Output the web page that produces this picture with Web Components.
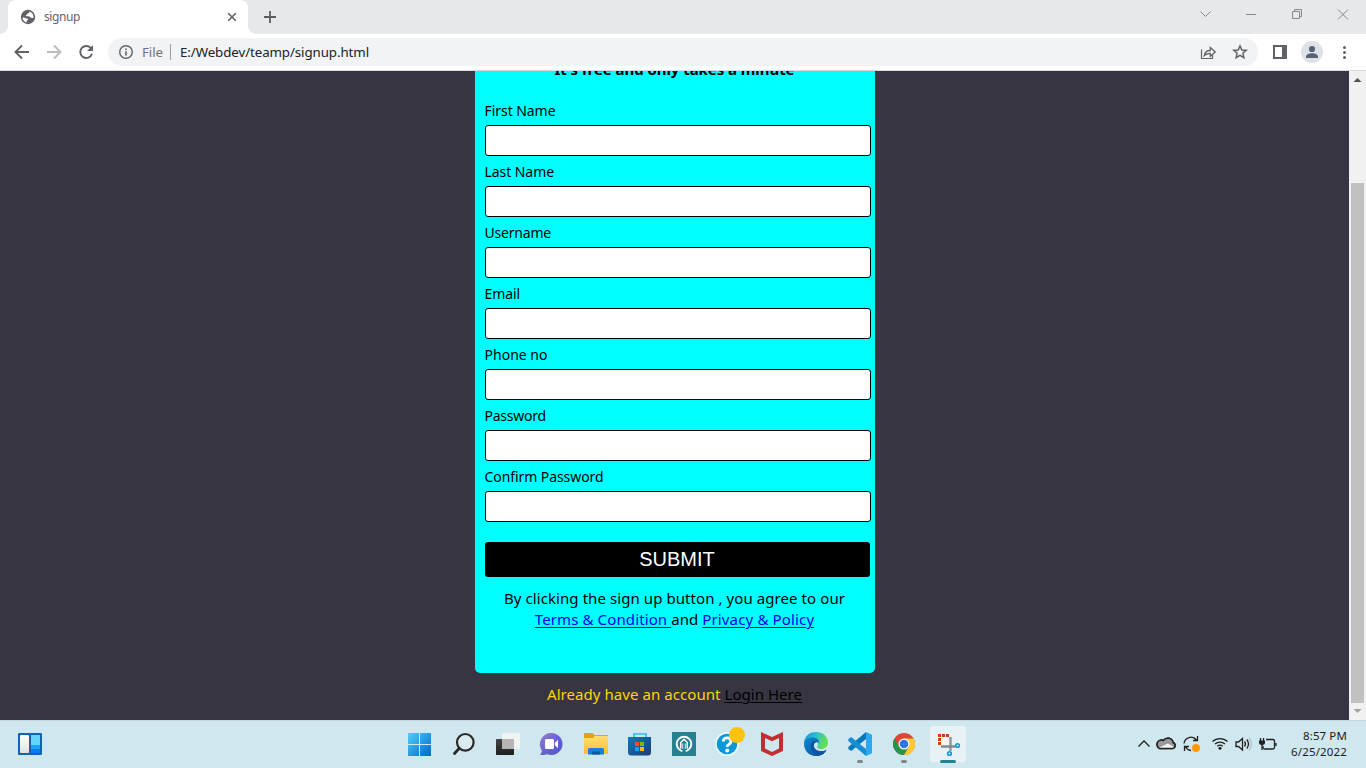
<!DOCTYPE html>
<html lang="en">
<head>
<meta charset="utf-8">
<title>signup</title>
<style>
html,body{margin:0;height:100%;overflow:hidden;font-family:"Noto Sans","Open Sans",sans-serif}
</style>
</head>
<body>
<desktop-screen></desktop-screen>
<script>
const define=(name,html,after)=>{
  const t=document.createElement('template');t.innerHTML=html;
  customElements.define(name,class extends HTMLElement{
    constructor(){super();this.attachShadow({mode:'open'}).append(t.content.cloneNode(true));}
    connectedCallback(){if(after)after.call(this,this.shadowRoot);}
  });
};

/* Text run whose tracking is adjusted to occupy a given width */
define('fit-text',`<style>:host{display:inline-block;white-space:pre}span{display:inline-block;white-space:pre;text-decoration:var(--line,none);text-decoration-thickness:1px;text-underline-offset:2px;text-decoration-skip-ink:auto}</style><span><slot></slot></span>`,function(root){
  const s=root.querySelector('span'),w=+this.getAttribute('width'),n=this.textContent.length;
  const now=s.getBoundingClientRect().width;
  if(w&&n)s.style.letterSpacing=((w-now)/n)+'px';
});

define('browser-tabs',`<style>
:host{display:flex;height:34px;background:#e5e9ec;align-items:stretch;padding-left:8px;box-sizing:border-box}
.tab{width:240px;box-sizing:border-box;background:#fff;border-radius:8px 8px 0 0;display:flex;align-items:center;padding:0 10px 0 12px;color:#5f6368;font-size:12px;position:relative}
.tab::before,.tab::after{content:"";position:absolute;bottom:0;width:8px;height:8px}
.tab::before{left:-8px;background:radial-gradient(circle at 0 0,transparent 7.5px,#fff 8px)}
.tab::after{right:-8px;background:radial-gradient(circle at 100% 0,transparent 7.5px,#fff 8px)}
.name{flex:1;margin-left:8px;line-height:32px}
svg{display:block;flex:none}
.plus{align-self:center;margin-left:15px}
.win{margin-left:auto;display:flex;align-items:center;height:28px}
</style>
<div class="tab">
<svg width="16" height="16" viewBox="0 0 16 16"><circle cx="8" cy="8" r="7.200" fill="#5f6368"/><path d="M2.500 8.500C4.500 8 5.500 9.500 7.300 9.500c1 0 1 1 .4 1.600-.8.600-.8 1.400-1.300 2.300C4 12.800 2.600 10.800 2.500 8.500ZM9.300 2.500c.3 1.200-.4 1.700-1.500 2-.9.300-.4 1.300-1.600 1.500-.7.200-.4 1.300.5 1.300 1.500 0 2.300-.3 3 .5.700.9 1.500 1.400 3.700 1.100.600-2.900-1.200-5.600-4.100-6.400Z" fill="#fff"/></svg>
<span class="name"><fit-text width="36">signup</fit-text></span>
<svg width="12" height="12" viewBox="0 0 12 12"><path d="M2.200 2.200l7.600 7.600M9.800 2.200l-7.600 7.600" stroke="#5f6368" stroke-width="1.600"/></svg>
</div>
<svg class="plus" width="14" height="14" viewBox="0 0 14 14"><path d="M7 1v12M1 7h12" stroke="#5b5d61" stroke-width="1.800"/></svg>
<div class="win">
<svg width="46" height="28" fill="none" stroke="#85888b"><path d="M18.500 11.500l5 5 5-5"/></svg>
<svg width="46" height="28" fill="none" stroke="#85888b"><path d="M18 14.500h10"/></svg>
<svg width="46" height="28" fill="none" stroke="#85888b"><path d="M18.500 11.500h7v7h-7zM20.500 11.500v-2h7v7h-2"/></svg>
<svg width="46" height="28" fill="none" stroke="#85888b"><path d="M18 9.500l10 10M28 9.500l-10 10"/></svg>
</div>`);

define('browser-toolbar',`<style>
:host{display:flex;height:37px;box-sizing:border-box;background:#fff;border-bottom:1px solid #d8dadd;align-items:center}
svg{display:block;flex:none}
.omni{height:28px;flex:none;width:1150px;background:#f1f3f4;border-radius:14px;display:flex;align-items:center;font-size:13.300px;box-sizing:border-box;padding-left:10px;color:#202124}
.file{color:#70757a;margin-left:8px}.bar{width:1px;height:16px;background:#9b9ea2;margin:0 9px 0 7px}
.sp{flex:1}
</style>
<svg width="108" height="36" fill="none" stroke="#5f6368" stroke-width="1.900"><path d="M29 18H16M22 11.500 15.500 18l6.500 6.500"/><g stroke="#babcbe"><path d="M47 18h13M54 11.500 60.500 18 54 24.500"/></g><path d="M91.200 14.500A6 6 0 1 0 92 19.800"/><path d="M93 11v6h-6z" fill="#5f6368" stroke="none"/></svg>
<div class="omni">
<svg width="16" height="16" viewBox="0 0 16 16"><circle cx="8" cy="8" r="6.300" fill="none" stroke="#5f6368" stroke-width="1.400"/><path d="M7.200 4.500h1.600v1.600H7.200zM7.200 7.300h1.600v4.300H7.200z" fill="#5f6368"/></svg>
<fit-text class="file" width="21">File</fit-text><span class="bar"></span><fit-text width="189">E:/Webdev/teamp/signup.html</fit-text>
<span class="sp"></span>
<svg width="66" height="28" fill="none" stroke="#5f6368"><path d="M9.500 11.500v9h11v-4" stroke-width="1.200"/><path d="M12.300 17.500c.6-3.500 3-5 6-5V9.500l5 4.500-5 4.300v-3c-2.700 0-4.500.6-6 2.200Z" stroke-width="1.300"/><path d="M48 7.900l1.800 4.100 4.400.4-3.300 2.900 1 4.400-3.900-2.300-3.900 2.300 1-4.400-3.300-2.900 4.400-.4Z" stroke-width="1.500"/></svg>
</div>
<svg width="108" height="36"><path fill="#5f6368" fill-rule="evenodd" d="M15 11h14v14H15zM17 13v10h7V13z"/><circle cx="54" cy="18" r="11" fill="#dee1e6"/><circle cx="54" cy="15" r="3.100" fill="#56617a"/><path d="M48 24v-1.500c0-2 3-3.300 6-3.300s6 1.300 6 3.300V24z" fill="#56617a"/><g fill="#5f6368"><circle cx="86.500" cy="13.500" r="1.500"/><circle cx="86.500" cy="18.500" r="1.500"/><circle cx="86.500" cy="23.500" r="1.500"/></g></svg>`);

define('form-field',`<style>
:host{display:block;height:61px}
label{display:block;height:30px;line-height:32px;font-size:14px}
input{display:block;box-sizing:border-box;width:386px;height:31px;border:1px solid #000;border-radius:3px;background:#fff;padding:0;outline:0}
</style><label><slot></slot></label><input type="text">`);

define('signup-card',`<style>
:host{display:block;width:400px;height:640px;margin:-38px auto 0;background:#0ff;border-radius:5px;box-sizing:border-box;padding:25px 0 0 10px;color:#000}
h4{margin:0 10px 0 0;text-align:center;font-size:15px;line-height:22px;height:15px;font-weight:700}
.fields{margin-top:22px}
button{display:block;width:385px;height:35px;margin-top:20px;border:0;border-radius:3px;background:#000;color:#fff;font:20px "Liberation Sans",Arial,sans-serif;padding:0}
p{margin:11px 10px 0 0;text-align:center;font-size:15px;line-height:21px;white-space:nowrap}
a{color:#00e;text-decoration:none;--line:underline}
fit-text{vertical-align:top}
</style>
<h4><fit-text width="240">It's free and only takes a minute</fit-text></h4>
<div class="fields">
<form-field><fit-text width="71">First Name</fit-text></form-field>
<form-field><fit-text width="69.500">Last Name</fit-text></form-field>
<form-field><fit-text width="66.500">Username</fit-text></form-field>
<form-field><fit-text width="35.500">Email</fit-text></form-field>
<form-field><fit-text width="63">Phone no</fit-text></form-field>
<form-field><fit-text width="61.500">Password</fit-text></form-field>
<form-field><fit-text width="119">Confirm Password</fit-text></form-field>
</div>
<button>SUBMIT</button>
<p><fit-text width="341">By clicking the sign up button , you agree to our</fit-text><br><a href="#"><fit-text width="136.500">Terms &amp; Condition </fit-text></a><fit-text width="31">and </fit-text><a href="#"><fit-text width="112">Privacy &amp; Policy</fit-text></a></p>`);

define('page-scrollbar',`<style>
:host{display:flex;flex-direction:column;width:17px;background:#f1f1f1}
svg{display:block;flex:none}.thumb{width:13px;height:520px;background:#c1c1c1;margin:95px 0 0 2px}
</style><svg width="17" height="17"><path d="M4.500 11 8.500 7l4 4z" fill="#505050"/></svg><div class="thumb"></div><svg width="17" height="17"><path d="M4.500 6h8l-4 4z" fill="#a3a3a3"/></svg>`);

define('page-view',`<style>
:host{display:flex;height:649px;overflow:hidden;background:#363541}
main{flex:1;overflow:hidden}
.login{margin:11px 0 0;text-align:center;font-size:15px;line-height:21px;color:#ffd700;white-space:nowrap}
a{color:#000;text-decoration:none;--line:underline}fit-text{vertical-align:top}
</style><main><signup-card></signup-card><p class="login"><fit-text width="177.500">Already have an account </fit-text><a href="#"><fit-text width="77.500">Login Here</fit-text></a></p></main><page-scrollbar></page-scrollbar>`);

define('task-icon',`<style>:host{display:block;width:44px;height:48px;flex:none}::slotted(svg){display:block}</style><slot></slot>`);

define('task-bar',`<style>
:host{display:flex;height:48px;background:#cfe7ee;box-shadow:inset 0 1px #c0d8df;color:#1b1b1b}
svg{display:block;flex:none}
.widgets{width:398px;flex:none}.tray{margin-left:auto;display:flex}
.clock{width:81px;box-sizing:border-box;padding:8px 19px 0 0;text-align:right;font-size:11.500px;line-height:16px}
.clock fit-text{display:block}
</style>
<div class="widgets"><svg width="60" height="48"><defs><linearGradient id="w" x2="0" y2="1"><stop stop-color="#fff"/><stop offset="1" stop-color="#e2e2e2"/></linearGradient></defs><rect x="18" y="13" width="24" height="22" rx="1" fill="#1163b5"/><rect x="20" y="15" width="9" height="18" rx=".7" fill="url(#w)"/><path d="M31 15h9v10h-9z" fill="#62d5ff"/><path d="M31 25h9v4h-9z" fill="#1aa2f4"/><path d="M31 29h9v4h-9z" fill="#087eea"/></svg></div>
<task-icon><svg width="44" height="48"><defs><linearGradient id="s" gradientUnits="userSpaceOnUse" x1="10" y1="13" x2="33" y2="36"><stop stop-color="#4fd0fb"/><stop offset="1" stop-color="#0067c9"/></linearGradient></defs><path fill="url(#s)" d="M10 13h11v11H10zM22 13h11v11H22zM10 25h11v11H10zM22 25h11v11H22z"/></svg></task-icon>
<task-icon><svg width="44" height="48"><circle cx="23.300" cy="22.300" r="8.300" fill="#dcecf1" stroke="#2a2a2a" stroke-width="2.200"/><path d="M17.300 28.300 12.500 33.500" stroke="#2a2a2a" stroke-width="2.800" stroke-linecap="round"/></svg></task-icon>
<task-icon><svg width="44" height="48"><defs><linearGradient id="t" x2="0" y2="1"><stop stop-color="#444"/><stop offset="1" stop-color="#1d1f1f"/></linearGradient></defs><rect x="10" y="19" width="18" height="16" rx=".7" fill="url(#t)"/><rect x="16" y="13" width="18" height="16" rx=".7" fill="#f1f2f2"/><path d="M16 19h12v10H16z" fill="#b5b5b5"/></svg></task-icon>
<task-icon><svg width="44" height="48"><defs><linearGradient id="c" x2="1" y2="1"><stop stop-color="#9b7bd2"/><stop offset=".5" stop-color="#6865cc"/><stop offset="1" stop-color="#5055c2"/></linearGradient></defs><path d="M21.500 13a11.500 11 0 1 1-4.700 21.200C14 35 10.500 35.200 10.300 35c-.4-.5 1.700-2.700 1.500-4.500A11.300 11.300 0 0 1 21.500 13Z" fill="url(#c)"/><rect x="15" y="19" width="9" height="10" rx="1.300" fill="#fff"/><path d="M25 22.500 28 20v8l-3-2.500z" fill="#fff"/></svg></task-icon>
<task-icon><svg width="44" height="48"><defs><linearGradient id="f" x2="0" y2="1"><stop stop-color="#ffdc73"/><stop offset="1" stop-color="#ffc22d"/></linearGradient></defs><path d="M10 21v-7.000q0-1 1-1h7q1 0 1.500 1l.8 1H33q1 0 1 1v5z" fill="#e3a20e"/><path d="M10 18h9l1.500-2H33q1 0 1 1v17H10z" fill="url(#f)"/><path d="M14 34.500v-5q0-1.500 1.500-1.500h13q1.500 0 1.500 1.500v5z" fill="#1680d2"/><path d="M18 34.500v-2q0-1 1-1h6q1 0 1 1v2z" fill="#0759a6"/></svg></task-icon>
<task-icon><svg width="44" height="48"><defs><linearGradient id="b" x2="1" y2="1"><stop stop-color="#087bc6"/><stop offset="1" stop-color="#203b70"/></linearGradient></defs><path d="M16 19v-5h12v5" fill="none" stroke="#30bdf2" stroke-width="1.700"/><path d="M10 17h23v15q0 3.500-3 3.500H13q-3 0-3-3.500z" fill="url(#b)"/><path d="M17 22h4v4h-4z" fill="#f25022"/><path d="M22 22h4v4h-4z" fill="#7fba00"/><path d="M17 27h4v4h-4z" fill="#00a4ef"/><path d="M22 27h4v4h-4z" fill="#ffb900"/></svg></task-icon>
<task-icon><svg width="44" height="48"><path d="M10 12h24v24H10z" fill="#258190"/><circle cx="22" cy="24" r="7.300" fill="none" stroke="#fff" stroke-width="1.900"/><path d="M18.700 28.500V22.500l3.300-3.300 3.300 3.300v6" fill="none" stroke="#fff" stroke-width="1.500"/><path d="M20.700 29v-5.500M23.300 29v-5.500" stroke="#fff" stroke-width=".8"/><path d="M20.300 29.500h3.400V33h-3.400z" fill="#258190"/></svg></task-icon>
<task-icon><svg width="44" height="48"><circle cx="21" cy="24" r="12" fill="#edf8fd"/><circle cx="21" cy="24" r="10.300" fill="#0998d8"/><path d="M17.200 21.500q.3-3.600 4-3.600 3.800 0 3.800 3.200 0 2-2 3.100-1.800 1-1.800 2.900" fill="none" stroke="#fff" stroke-width="2.900"/><circle cx="21.200" cy="30.500" r="1.900" fill="#fff"/><circle cx="31" cy="15" r="8" fill="#ffc20e"/></svg></task-icon>
<task-icon><svg width="44" height="48"><path d="M11 12l11 5 11-5v19l-11 5-11-5z" fill="#c22e31"/><path d="M15 18l7 3.300 7-3.300v10.500L22 32l-7-3.500z" fill="#d0e7ee"/></svg></task-icon>
<task-icon><svg width="44" height="48"><defs><linearGradient id="e" x2="1" y2=".3"><stop stop-color="#118ed3"/><stop offset=".5" stop-color="#2bc0d5"/><stop offset="1" stop-color="#65df51"/></linearGradient><linearGradient id="e2" x2="1" y2="1"><stop stop-color="#1187d0"/><stop offset="1" stop-color="#084b99"/></linearGradient></defs><path d="M10 24C10 16.500 15 12 22 12c7.500 0 12 5 12 10.500 0 4-3 6.500-7 6.500-3 0-4.300-1.300-3.800-2.300 1.800-2.700.2-6.200-4.200-6.200-4.500 0-9 1.800-9 3.500Z" fill="url(#e)"/><path d="M10 24c.5-4.500 5-6.500 9-6.500 4.500 0 7 3.500 5.500 5.500-2-2.300-5 0-4.700 3 .4 4.200 6.500 6.800 12.700 4C30 34.500 26.500 36 22 36c-7 0-12-5.500-12-12Z" fill="url(#e2)"/><path d="M18 22c-3.500 5 .5 11.500 7 13.600 3-.8 5.800-2.600 7.400-5.400-6.200 2.800-12.400 0-12.700-4.200 0-2.600 2-4.400 3.600-3.600C22 20.500 19.500 20.500 18 22Z" fill="#0c55a4"/></svg></task-icon>
<task-icon><svg width="44" height="48"><path d="M28 12v7L13.200 31 10.300 29v-2z" fill="#0878bd"/><path d="M28 36v-7L13.200 17 10.300 19v2z" fill="#168dd4"/><path d="M28 12l6 2.700v18.600L28 36z" fill="#2aa8f2"/><rect x="19" y="40" width="6" height="3" rx="1.500" fill="#7d878b"/></svg></task-icon>
<task-icon><svg width="44" height="48"><circle cx="22" cy="24" r="11" fill="#e04435"/><path d="M17.240 26.750 12.470 18.500A11 11 0 0 0 22 35L26.760 26.750z" fill="#26944d"/><path d="M31.530 18.500A11 11 0 0 1 22 35L26.760 26.750 22 18.500z" fill="#fcc934"/><circle cx="22" cy="24" r="5.500" fill="#fff"/><circle cx="22" cy="24" r="4.300" fill="#2c75e3"/><rect x="19" y="40" width="6" height="3" rx="1.500" fill="#7d878b"/></svg></task-icon>
<task-icon><svg width="44" height="48"><rect x="3.500" y="5.500" width="37" height="37" rx="3.500" fill="#e7f2f6" stroke="#d7e6eb"/><path d="M11 13h13v13H11z" fill="#f8f4f2"/><path d="M12 14h3v3h-3zM16 14h3v3h-3zM20 14h3v3h-3zM12 18h3v3h-3zM12 22h3v3h-3z" fill="#d83b0b"/><path d="M24.500 17v14" stroke="#8f9498" stroke-width="2.400"/><path d="M15 26.500h14" stroke="#82888d" stroke-width="2.400"/><circle cx="31.500" cy="25.500" r="2.600" fill="#1695d3"/><circle cx="23.500" cy="33.500" r="2.600" fill="#1695d3"/><path d="M30.500 25.500h2M31.500 24.500v2M22.500 33.500h2M23.500 32.500v2" stroke="#d8f1fd"/><rect x="14" y="40" width="16" height="3" rx="1.500" fill="#238292"/></svg></task-icon>
<div class="tray">
<svg width="150" height="48" fill="none" stroke="#202020" stroke-width="1.300">
<path d="M3.500 26.500l5.500-5.500 5.500 5.500"/>
<path d="M24.500 28.500h13a3 3 0 0 0 .7-5.800 5.500 5.500 0 0 0-9.900-2.300A4.200 4.200 0 0 0 24.500 28.500Z" fill="#999"/><path d="M24 27.500l9-4 6.500 4-1.500 1H25z" fill="#f4f4f4" stroke="none"/><path d="M24.500 28.500h13a3 3 0 0 0 .7-5.800 5.500 5.500 0 0 0-9.900-2.300A4.200 4.200 0 0 0 24.500 28.500Z"/>
<path d="M49 23.500a7 7 0 0 1 12.500-3.500M62.500 16v4.500H58M56 30.500a7 7 0 0 1-5.500-3.500M49.500 31v-4.500H54"/><circle cx="61" cy="28" r="4" fill="#ff9800" stroke="none"/>
<path d="M77.500 21.500a11 11 0 0 1 15 0M80 24a7.500 7.500 0 0 1 10 0M82.300 26.300a4 4 0 0 1 5.400 0"/><circle cx="85" cy="28.300" r="1.500" fill="#202020" stroke="none"/>
<path d="M101 22h2.500l4-3.500v11.500l-4-3.500H101z"/><path d="M109.500 21.500q2 2.500 0 5M111.800 19.500q3.500 4.500 0 9"/><path d="M114 18q4.500 6 0 12" stroke="#adc1c8"/>
<path d="M132 19.500h7q1.500 0 1.500 1.500v6.500q0 1.500-1.500 1.500h-8.500q-1.500 0-1.500-1.500V26M142 23v3" transform="translate(-1 0)"/><path d="M125.500 18v3M128.500 18v3M127 24v6"/><path d="M124 20.500h6v2q0 2.500-3 2.500t-3-2.500z" fill="#202020" stroke="none"/>
</svg>
<div class="clock"><fit-text width="44">8:57 PM</fit-text><fit-text width="56">6/25/2022</fit-text></div>
</div>`);

define('desktop-screen',`<style>:host{display:flex;flex-direction:column;width:1366px;height:768px;overflow:hidden}</style><browser-tabs></browser-tabs><browser-toolbar></browser-toolbar><page-view></page-view><task-bar></task-bar>`);
</script>
</body>
</html>
